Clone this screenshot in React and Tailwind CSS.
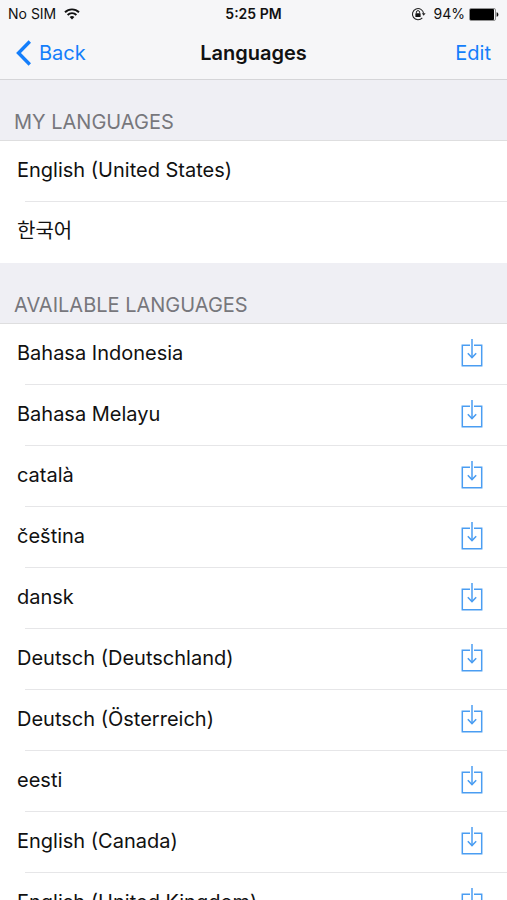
const myLanguages = ['English (United States)', '한국어']

const availableLanguages = [
  'Bahasa Indonesia',
  'Bahasa Melayu',
  'català',
  'čeština',
  'dansk',
  'Deutsch (Deutschland)',
  'Deutsch (Österreich)',
  'eesti',
  'English (Canada)',
  'English (United Kingdom)',
]

function WifiIcon() {
  return (
    <svg width="16" height="12" viewBox="0 0 16 12" fill="none" stroke="#111" strokeWidth="1.9" aria-hidden="true">
      <path d="M1 4.2a10 10 0 0 1 14 0" />
      <path d="M3.6 7a6.2 6.2 0 0 1 8.8 0" />
      <path d="M8 11.6 5.6 9.1a3.4 3.4 0 0 1 4.8 0Z" fill="#111" stroke="none" />
    </svg>
  )
}

function RotationLockIcon() {
  return (
    <svg width="15" height="14" viewBox="0 0 15 14" fill="none" stroke="#222" aria-hidden="true">
      <path d="M11.3 10.8a5.6 5.6 0 1 1 1.3-4.3" strokeWidth="1.1" />
      <path d="m10.8 6.3 1.9 2.5 1.9-2.5Z" fill="#222" stroke="none" />
      <rect x="4.4" y="6.3" width="5.2" height="3.8" rx=".4" fill="#111" stroke="none" />
      <path d="M5.4 6.4V5.2a1.6 1.6 0 0 1 3.2 0v1.2" strokeWidth="1" />
    </svg>
  )
}

function BatteryIcon() {
  return (
    <svg width="30" height="13" viewBox="0 0 30 13" aria-hidden="true">
      <rect x=".5" y=".5" width="26" height="12" rx="1.5" fill="none" stroke="#777" strokeWidth=".8" />
      <rect x="1" y="1" width="24" height="11" rx=".8" fill="#000" />
      <path d="M27.6 4.2c2.4.6 2.4 4 0 4.6Z" fill="#111" />
    </svg>
  )
}

function DownloadIcon() {
  return (
    <svg width="22" height="28" viewBox="0 0 22 28" fill="none" stroke="#4a9df2" strokeWidth="1.5" aria-hidden="true">
      <path d="M9 6.2H1.3v20.5h19.4V6.2H13" />
      <path d="M11 0v19" />
      <path d="m6.8 14.2 4.2 4.4 4.2-4.4" />
    </svg>
  )
}

function LanguageRow({ name, last, downloadable }) {
  return (
    <li className="flex h-[61px] items-stretch bg-white">
      <div className="relative flex flex-1 items-center justify-between pr-6 pb-1 pl-[17px]">
        <span className="text-xl whitespace-nowrap">{name}</span>
        {downloadable && (
          <button type="button" aria-label={`Download ${name}`}>
            <DownloadIcon />
          </button>
        )}
        {!last && <div className="absolute right-0 bottom-0 left-[25px] h-px bg-[#e6e6e8]" />}
      </div>
    </li>
  )
}

function LanguageSection({ title, languages, downloadable }) {
  return (
    <section>
      <h2 className="flex h-[61px] items-end border-b border-[#dededf] bg-[#efeff4] px-3.5 pb-1 text-xl text-[#77777c]">
        {title}
      </h2>
      <ul>
        {languages.map((name, i) => (
          <LanguageRow
            key={name}
            name={name}
            last={i === languages.length - 1}
            downloadable={downloadable}
          />
        ))}
      </ul>
    </section>
  )
}

export default function App() {
  return (
    <div className="flex h-screen flex-col overflow-hidden bg-white font-['Inter','Noto_Sans_CJK_KR',sans-serif] text-[#111]">
      <header className="shrink-0 border-b border-[#d5d5d8] bg-[#f6f6f8]">
        <div className="grid h-7 grid-cols-3 items-center px-2 text-sm">
          <div className="flex items-center gap-2">
            <span>No SIM</span>
            <WifiIcon />
          </div>
          <span className="text-center font-semibold">5:25 PM</span>
          <div className="flex items-center justify-end gap-1">
            <RotationLockIcon />
            <span className="ml-1">94%</span>
            <BatteryIcon />
          </div>
        </div>
        <div className="grid h-[51px] grid-cols-3 items-center px-4 pb-0.5 text-xl">
          <button type="button" className="flex items-center gap-2 text-[#147efb]">
            <svg width="15" height="26" viewBox="0 0 15 26" fill="none" stroke="currentColor" strokeWidth="3.4" aria-hidden="true">
              <path d="M13.8 1.5 2.5 13l11.3 11.5" />
            </svg>
            Back
          </button>
          <h1 className="text-center font-semibold">Languages</h1>
          <button type="button" className="justify-self-end text-[#147efb]">Edit</button>
        </div>
      </header>
      <main className="min-h-0 flex-1 overflow-y-auto [scrollbar-width:none]">
        <LanguageSection title="MY LANGUAGES" languages={myLanguages} />
        <LanguageSection title="AVAILABLE LANGUAGES" languages={availableLanguages} downloadable />
      </main>
    </div>
  )
}
